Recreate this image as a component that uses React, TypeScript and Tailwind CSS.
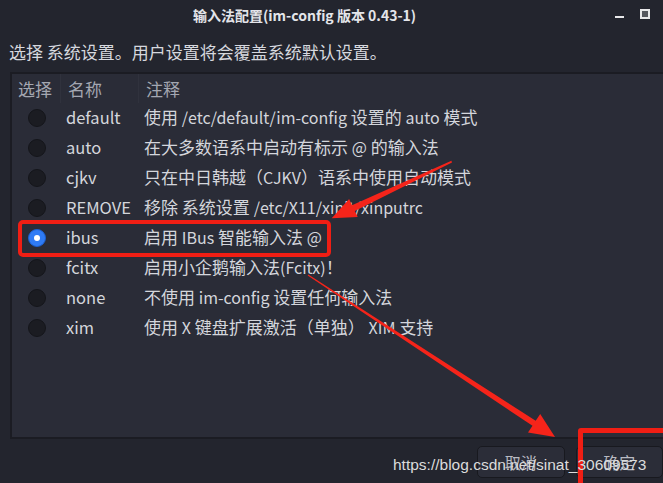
import React from "react";

const rows = [
  { name: "default", desc: "使用 /etc/default/im-config 设置的 auto 模式" },
  { name: "auto", desc: "在大多数语系中启动有标示 @ 的输入法" },
  { name: "cjkv", desc: "只在中日韩越（CJKV）语系中使用自动模式" },
  { name: "REMOVE", desc: "移除 系统设置 /etc/X11/xinit/xinputrc" },
  { name: "ibus", desc: "启用 IBus 智能输入法 @", selected: true },
  { name: "fcitx", desc: "启用小企鹅输入法(Fcitx)！" },
  { name: "none", desc: "不使用 im-config 设置任何输入法" },
  { name: "xim", desc: "使用 X 键盘扩展激活（单独） XIM 支持" },
];

function Mixed({ text }: { text: string }) {
  const parts = text.split(/([\x21-\x7e]+)/);
  return (
    <>
      {parts.map((p, i) =>
        /^[\x21-\x7e]+$/.test(p) ? (
          <span key={i} className="text-[16px]">
            {p}
          </span>
        ) : (
          <span key={i}>{p}</span>
        )
      )}
    </>
  );
}

function Radio({ on }: { on?: boolean }) {
  if (on) {
    return (
      <div className="w-[18px] h-[18px] rounded-full bg-[#2f7bf5] border border-[#1a5fd0] flex items-center justify-center">
        <div className="w-[6px] h-[6px] rounded-full bg-white" />
      </div>
    );
  }
  return <div className="w-[18px] h-[18px] rounded-full bg-[#1b1c22] border border-[#14151a]" />;
}

export default function App() {
  return (
    <div
      className="relative w-[663px] h-[483px] overflow-hidden bg-[#23252e] text-[#d4d6dc] [text-spacing-trim:space-all]"
      style={{ fontFamily: '"Noto Sans CJK SC", "Noto Sans", sans-serif' }}
    >
      {/* title bar */}
      <div className="h-[30px] flex items-center relative">
        <div className="pl-[193px] text-[14px] font-bold text-[#e4e5ea] leading-none">
          输入法配置(im-config 版本 0.43-1)
        </div>
        <div className="absolute left-[615px] top-[16px] w-[9px] h-[2px] bg-[#e8e8ea]" />
        <div className="absolute left-[640px] top-[9px] w-[10px] h-[10px] border-2 border-[#e8e8ea] bg-[#55575e]" />
      </div>

      {/* subtitle */}
      <div className="mt-[11px] pl-[9px] text-[17px] leading-[22px] text-[#d6d8de] whitespace-nowrap">
        选择 系统设置。用户设置将会覆盖系统默认设置。
      </div>

      {/* list */}
      <div className="mt-[9px] ml-[10px] w-[700px] h-[367px] border-2 border-[#1b1c23] bg-[#2a2c37]">
        <div className="flex h-[29px] items-center text-[17px] text-[#a4a7b1]">
          <div className="w-[49px] pl-[6px] h-full flex items-center border-r border-[#30323d]">选择</div>
          <div className="w-[78px] pl-[7px] h-full flex items-center border-r border-[#30323d]">名称</div>
          <div className="pl-[7px]">注释</div>
        </div>
        {rows.map((r) => (
          <div key={r.name} className="flex h-[30px] items-center text-[17px] leading-[24px] whitespace-nowrap">
            <div className="w-[49px] flex justify-center">
              <Radio on={r.selected} />
            </div>
            <div className="w-[78px] pl-[5px] -mt-[2px] text-[16.5px]">{r.name}</div>
            <div className="pl-[5px] -mt-[2px]">
              <Mixed text={r.desc} />
            </div>
          </div>
        ))}
      </div>

      {/* buttons */}
      <div className="flex mt-[7px] ml-[477px] gap-[11px]">
        <div className="w-[95px] h-[32px] rounded-[5px] border border-[#18191f] bg-[#2b2d38] flex items-center justify-center text-[16px] text-[#b8bac2]">
          取消
        </div>
        <div className="w-[95px] h-[32px] rounded-[5px] border border-[#18191f] bg-[#2b2d38] flex items-center justify-center text-[16px] text-[#b8bac2]">
          确定
        </div>
      </div>

      {/* annotations */}
      <div className="absolute left-[18px] top-[220px] w-[313px] h-[37px] border-[4px] border-[#f01e14] rounded-[5px] pointer-events-none" />
      <div className="absolute left-[578px] top-[428px] w-[110px] h-[80px] border-[5px] border-[#f01e14] rounded-[3px] pointer-events-none" />
      <svg className="absolute inset-0 pointer-events-none" width="663" height="483" viewBox="0 0 663 483">
        <polygon
          fill="#f5241a"
          points="452.0,162.6 354.8,211.0 357.7,217.1 331.7,218.3 349.1,199.1 352.0,205.2 451.4,160.8"
        />
        <polygon
          fill="#f5241a"
          points="307.7,275.4 532.5,425.8 528.0,432.5 555,437 540.2,414.0 535.7,420.8 308.3,274.6"
        />
      </svg>
      <div
        className="absolute left-[393px] top-[453px] text-[15.5px] text-[#dcdcdc] whitespace-nowrap"
        style={{ fontFamily: '"Liberation Sans", Arial, sans-serif' }}
      >
        https://blog.csdn.net/sinat_30609573
      </div>
    </div>
  );
}
